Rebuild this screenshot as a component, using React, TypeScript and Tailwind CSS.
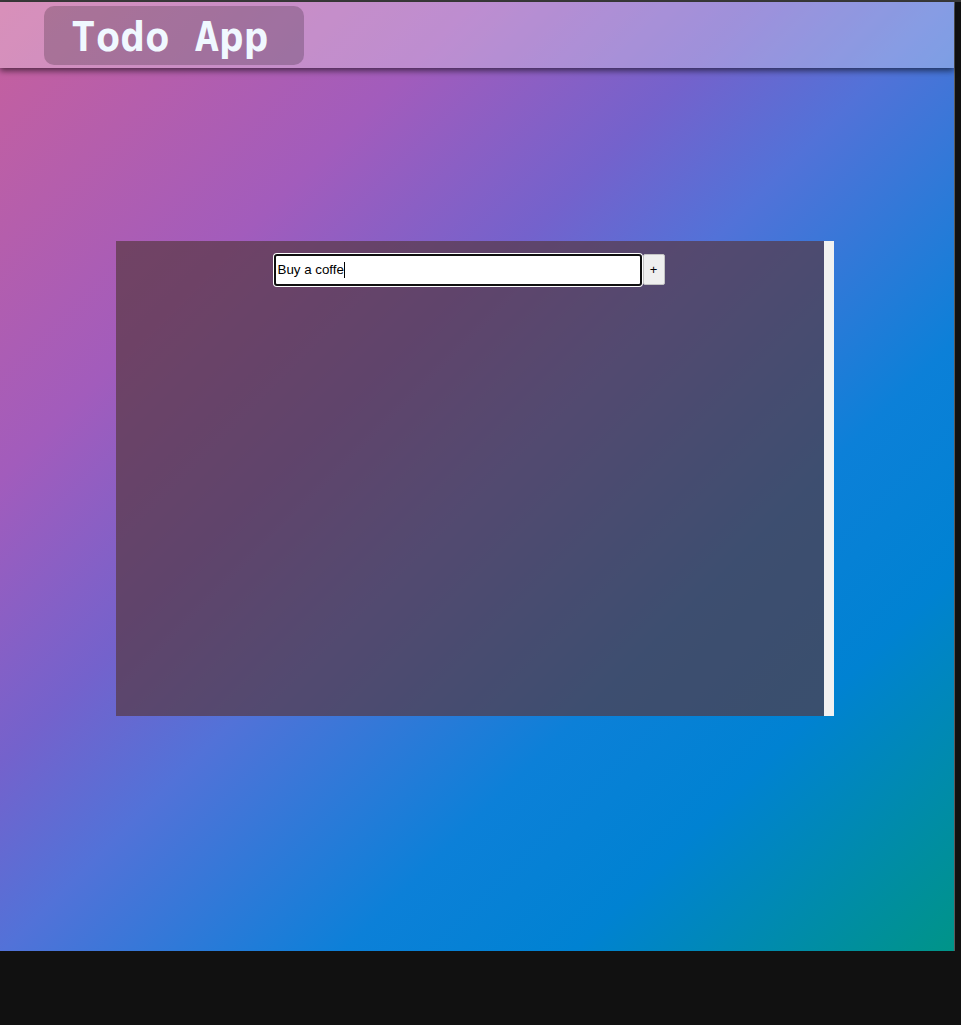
export default function App() {
  return (
    <div className="w-[961px] h-[1025px] bg-[#111111] overflow-hidden">
      <div className="h-[2px] bg-[#3a3a3a]" />
      <div className="w-[955px] h-[949px] border-r border-[#5c5c5c] bg-[linear-gradient(135deg,#c8609c_0%,#a25cbc_25%,#7462cc_40%,#5272d8_50%,#0c80d8_68%,#0082d2_80%,#009488_100%)]">
        {/* header bar */}
        <header className="h-[66px] bg-[rgba(255,255,255,0.3)] shadow-[0_3px_6px_rgba(0,0,0,0.55)] flex items-center pl-[44px]">
          <div className="h-[59px] flex items-center pl-[27px] pr-[36px] pt-[4px] rounded-[10px] bg-[rgba(0,0,0,0.2)]">
            <h1 className="font-['DejaVu_Sans_Mono',monospace] font-bold text-[41px] leading-none text-[#f0f8ff] whitespace-pre">
              Todo App
            </h1>
          </div>
        </header>

        {/* todo card */}
        <div className="ml-[116px] mt-[173px] w-[718px] h-[475px] flex">
          <div className="flex-1 bg-[rgba(85,55,62,0.68)] pt-[13px] pr-[2px] flex justify-center">
            <div className="flex items-start h-[32px]">
              <div className="w-[368px] h-[32px] rounded-[3px] border-2 border-[#101010] bg-white shadow-[0_0_0_1px_#ffffff] flex items-center pl-[2px]">
                <span className="font-['Liberation_Sans',Arial,sans-serif] text-[13.33px] text-black">Buy a coffe</span>
                <span className="w-px h-[16px] bg-black" />
              </div>
              <button className="ml-px w-[22px] h-[31px] rounded-[2px] border border-[#c4c4c4] bg-[#efefef] font-['Liberation_Sans',Arial,sans-serif] text-[13px] text-black flex items-center justify-center">
                +
              </button>
            </div>
          </div>
          <div className="w-[10px] bg-[#f1f1f1]" />
        </div>
      </div>
    </div>
  );
}
